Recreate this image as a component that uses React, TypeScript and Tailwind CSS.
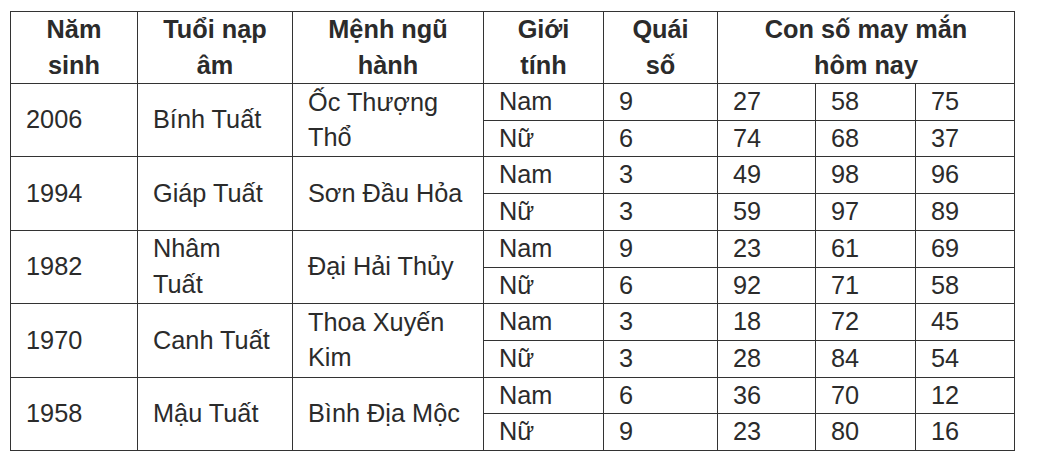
import React from "react";

type Row = {
  year: string;
  tuoi: string[];
  menh: string[];
  nam: { q: string; n: string[] };
  nu: { q: string; n: string[] };
};

const rows: Row[] = [
  { year: "2006", tuoi: ["Bính Tuất"], menh: ["Ốc Thượng", "Thổ"], nam: { q: "9", n: ["27", "58", "75"] }, nu: { q: "6", n: ["74", "68", "37"] } },
  { year: "1994", tuoi: ["Giáp Tuất"], menh: ["Sơn Đầu Hỏa"], nam: { q: "3", n: ["49", "98", "96"] }, nu: { q: "3", n: ["59", "97", "89"] } },
  { year: "1982", tuoi: ["Nhâm", "Tuất"], menh: ["Đại Hải Thủy"], nam: { q: "9", n: ["23", "61", "69"] }, nu: { q: "6", n: ["92", "71", "58"] } },
  { year: "1970", tuoi: ["Canh Tuất"], menh: ["Thoa Xuyến", "Kim"], nam: { q: "3", n: ["18", "72", "45"] }, nu: { q: "3", n: ["28", "84", "54"] } },
  { year: "1958", tuoi: ["Mậu Tuất"], menh: ["Bình Địa Mộc"], nam: { q: "6", n: ["36", "70", "12"] }, nu: { q: "9", n: ["23", "80", "16"] } },
];

const th = "border border-[#333] font-bold text-center align-middle px-2 leading-[35.5px]";
const td = "border border-[#333] align-middle pl-[15px] pr-2 leading-[35.7px] text-left font-normal";

const Lines = ({ lines }: { lines: string[] }) => (
  <>
    {lines.map((l, i) => (
      <div key={i}>{l}</div>
    ))}
  </>
);

export default function App() {
  return (
    <div className="w-[1037px] h-[473px] bg-white pt-[11px] pl-[10px] text-[25.3px] text-[#2b2b2b]" style={{ fontFamily: '"Liberation Sans", Arial, sans-serif' }}>
      <table className="border-collapse table-fixed w-[1004px]">
        <colgroup>
          <col className="w-[127px]" />
          <col className="w-[155px]" />
          <col className="w-[191px]" />
          <col className="w-[120px]" />
          <col className="w-[114px]" />
          <col className="w-[98px]" />
          <col className="w-[100px]" />
          <col className="w-[99px]" />
        </colgroup>
        <thead>
          <tr>
            <th className={th}><Lines lines={["Năm", "sinh"]} /></th>
            <th className={th}><Lines lines={["Tuổi nạp", "âm"]} /></th>
            <th className={th}><Lines lines={["Mệnh ngũ", "hành"]} /></th>
            <th className={th}><Lines lines={["Giới", "tính"]} /></th>
            <th className={th}><Lines lines={["Quái", "số"]} /></th>
            <th className={th} colSpan={3}><Lines lines={["Con số may mắn", "hôm nay"]} /></th>
          </tr>
        </thead>
        <tbody>
          {rows.map((r) => (
            <React.Fragment key={r.year}>
              <tr>
                <td className={td} rowSpan={2}>{r.year}</td>
                <td className={td} rowSpan={2}><Lines lines={r.tuoi} /></td>
                <td className={td} rowSpan={2}><Lines lines={r.menh} /></td>
                <td className={td}>Nam</td>
                <td className={td}>{r.nam.q}</td>
                {r.nam.n.map((n, i) => (
                  <td key={i} className={td}>{n}</td>
                ))}
              </tr>
              <tr>
                <td className={td}>Nữ</td>
                <td className={td}>{r.nu.q}</td>
                {r.nu.n.map((n, i) => (
                  <td key={i} className={td}>{n}</td>
                ))}
              </tr>
            </React.Fragment>
          ))}
        </tbody>
      </table>
    </div>
  );
}
